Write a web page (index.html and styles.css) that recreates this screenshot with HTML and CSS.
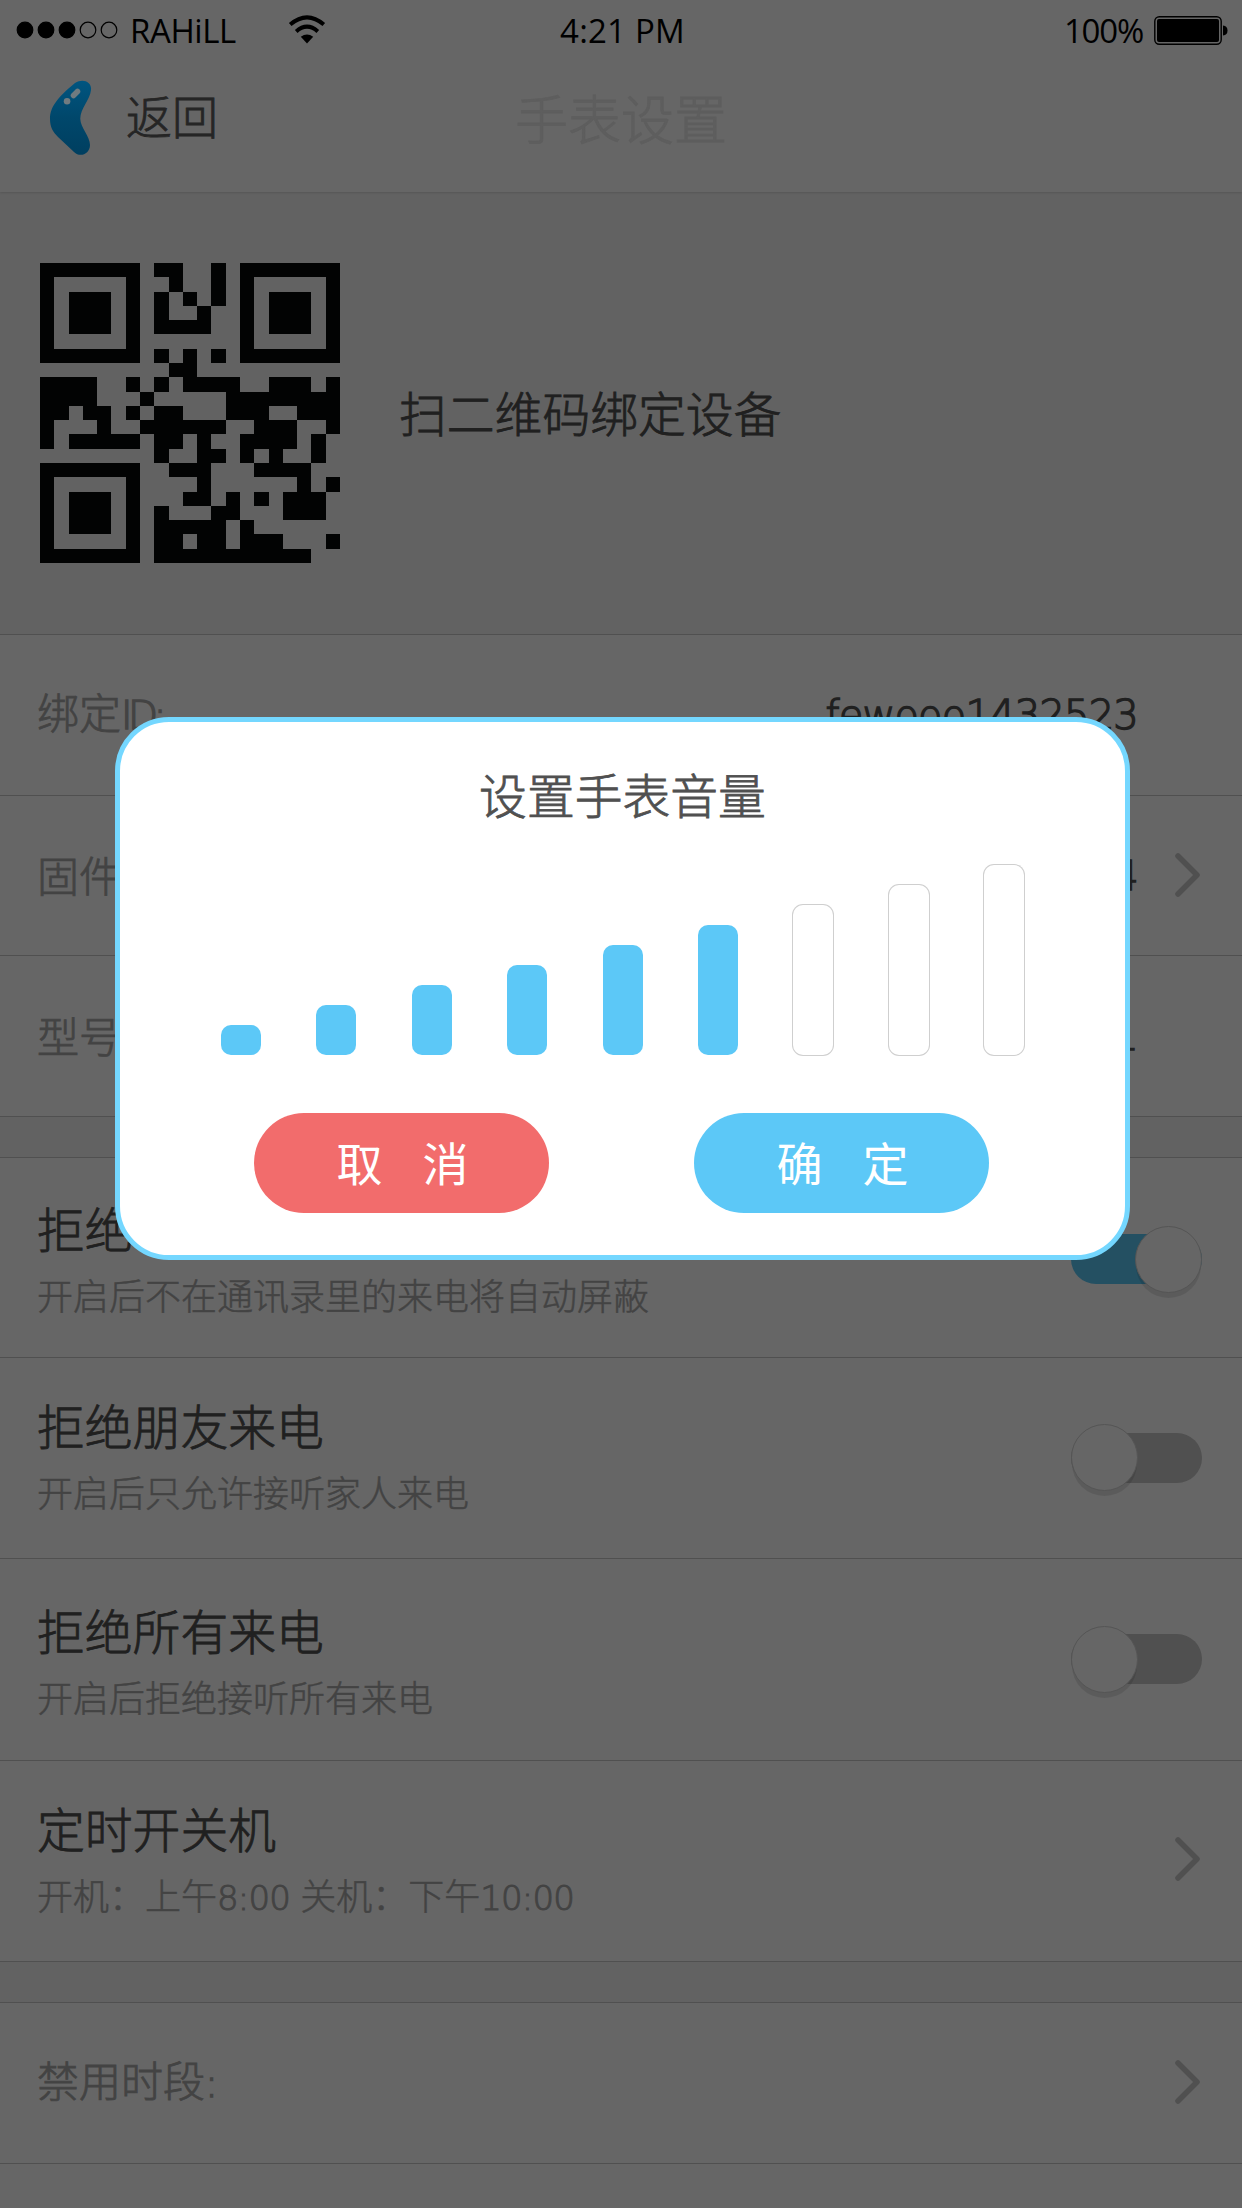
FILE: index.html
```html
<!DOCTYPE html>
<html lang="zh-CN">
<head>
<meta charset="utf-8">
<title>手表设置</title>
<link rel="stylesheet" href="styles.css">
</head>
<body>
<div class="screen">
  <header class="header">
    <div class="status">
      <div class="status-left">
        <svg class="signal" width="102" height="18" viewBox="0 0 102 18"><g stroke="#000" stroke-width="1.2"><circle cx="9" cy="9" r="7.8"/><circle cx="30" cy="9" r="7.8"/><circle cx="51" cy="9" r="7.8"/><circle cx="72" cy="9" r="7.8" fill="none"/><circle cx="93" cy="9" r="7.8" fill="none"/></g></svg>
        <span class="carrier">RAHiLL</span>
        <svg class="wifi" width="38" height="30" viewBox="0 0 38 30"><path d="M2.200 9.600Q19-4.800 35.800 9.600M8.200 16.400Q19 6.800 29.800 16.400" fill="none" stroke="#000" stroke-width="4"/><path d="M19 28.500 12.800 21.800Q19 17 25.200 21.800Z"/></svg>
      </div>
      <span class="clock">4:21 PM</span>
      <div class="status-right">
        <span class="percent">100%</span>
        <svg width="75" height="29" viewBox="0 0 75 29"><rect x=".8" y=".8" width="66.400" height="27.400" rx="4.500" fill="none" stroke="#000" stroke-width="1.400"/><rect x="3" y="3" width="62" height="23" rx="2"/><path d="M69 9.500Q73.500 10 73.500 14.500T69 19.500Z"/></svg>
      </div>
    </div>
    <nav class="nav">
      <div class="back">
        <svg class="bean" width="44" height="78" viewBox="48 78 44 78"><defs><linearGradient id="b" x1="0" y1="0" x2="0" y2="1"><stop offset="0" stop-color="#005580"/><stop offset=".5" stop-color="#00476b"/><stop offset="1" stop-color="#003f60"/></linearGradient></defs><path d="M75 82C83 77 92 81 91 89C90 99 80 108 80.300 118C80.500 127 90 135 90 144C90 153 80 157 74 151L58 136C53 131 50 126 50 118C50 106 57 97 75 82Z" fill="url(#b)"/><g stroke="#707b80" stroke-linecap="round"><path d="M67 100.300h.1" stroke-width="6.500"/><path d="M73.500 94.500 77.500 90.500" stroke-width="5.500"/></g></svg>
        <span>返回</span>
      </div>
      <h1 class="nav-title">手表设置</h1>
    </nav>
  </header>

  <section class="qr-panel">
    <svg width="300" height="300" viewBox="0 0 21 21" shape-rendering="crispEdges"><g fill="none" stroke="#020303"><path d="M.5 .5h6v6h-6zM14.500 .5h6v6h-6zM.5 14.500h6v6h-6z"/><path d="M2 3.500h3M16 3.500h3M2 17.500h3" stroke-width="3"/><path d="M8 .5h2m2 0h1M9 1.500h1m2 0h1M8 2.500h1m1 0h1m1 0h1M8 3.500h1m2 0h1M8 4.500h4M8 6.500h1m1 0h1m1 0h1M9 7.500h2M0 8.500h4m2 0h1m1 0h1m1 0h4m2 0h3m1 0h1M0 9.500h4m3 0h1m5 0h8M0 10.500h2m1 0h2m1 0h1m1 0h2m3 0h3m2 0h3M0 11.500h1m3 0h1m2 0h6m2 0h3m2 0h1M0 12.500h1m1 0h5m1 0h2m1 0h1m2 0h4m1 0h1M8 13.500h1m2 0h2m1 0h1m1 0h1m2 0h1M9 14.500h3m3 0h4M11 15.500h1m6 0h1m1 0h1M10 16.500h2m1 0h1m1 0h1m1 0h3M8 17.500h1m3 0h2m3 0h3M8 18.500h5m1 0h1M8 19.500h2m1 0h2m1 0h3m3 0h1M8 20.500h11"/></g></svg>
    <p class="qr-text">扫二维码绑定设备</p>
  </section>

  <section class="group">
    <div class="row"><span class="label">绑定<span class="latin id">ID:</span></span><span class="latin value">fewooo1432523</span></div>
    <div class="row info"><span class="label">固件</span><span class="latin value">4</span><svg class="chevron" width="26" height="44" viewBox="0 0 26 44"><path d="M3 3 22 22 3 41"/></svg></div>
    <div class="row"><span class="label">型号</span><span class="latin value">1</span></div>
  </section>

  <section class="group">
    <div class="row tall"><div class="text"><h2>拒绝</h2><p>开启后不在通讯录里的来电将自动屏蔽</p></div><span class="toggle on"></span></div>
    <div class="row tall up"><div class="text"><h2>拒绝朋友来电</h2><p>开启后只允许接听家人来电</p></div><span class="toggle"></span></div>
    <div class="row tall"><div class="text"><h2>拒绝所有来电</h2><p>开启后拒绝接听所有来电</p></div><span class="toggle"></span></div>
    <div class="row tall up timer"><div class="text"><h2>定时开关机</h2><p>开机：上午<span class="latin">8:00 </span>关机：下午<span class="latin">10:00</span></p></div><svg class="chevron" width="26" height="44" viewBox="0 0 26 44"><path d="M3 3 22 22 3 41"/></svg></div>
  </section>

  <section class="group last">
    <div class="row"><span class="label">禁用时段<span class="latin id">:</span></span><svg class="chevron" width="26" height="44" viewBox="0 0 26 44"><path d="M3 3 22 22 3 41"/></svg></div>
  </section>

  <div class="dialog">
    <h2 class="dialog-title">设置手表音量</h2>
    <div class="volume">
      <i class="bar full" style="height:30px"></i><i class="bar full" style="height:50px"></i><i class="bar full" style="height:70px"></i><i class="bar full" style="height:90px"></i><i class="bar full" style="height:110px"></i><i class="bar full" style="height:130px"></i><i class="bar" style="height:150px"></i><i class="bar" style="height:170px"></i><i class="bar" style="height:190px"></i>
    </div>
    <div class="actions">
      <button class="btn cancel">取<span class="gap"></span>消</button>
      <button class="btn confirm">确<span class="gap"></span>定</button>
    </div>
  </div>
</div>
</body>
</html>
```
FILE: styles.css
```css
* { box-sizing: border-box; margin: 0; padding: 0; }
:root {
  --surface: #666;
  --page: #626262;
  --line: #505050;
  --ink: #202020;
  --muted: #434343;
  --sky: #5cc8f7;
}
body {
  background: var(--page);
  color: var(--ink);
  font-family: "Noto Sans CJK SC", sans-serif;
  font-weight: 300;
  -webkit-text-stroke: .8px currentColor;
}
h1, h2 { font-weight: 300; }
.screen { position: relative; width: 1242px; height: 2208px; overflow: hidden; display: flex; flex-direction: column; }

.header { height: 192px; flex: none; background: var(--surface); box-shadow: 0 1px 2px rgba(0, 0, 0, .12); }
.status {
  height: 58px; padding: 0 13px 0 16px;
  display: grid; grid-template-columns: 1fr auto 1fr; align-items: center;
  font-family: "Open Sans", sans-serif; font-size: 33px; line-height: 58px; color: #000; font-weight: 400;
  -webkit-text-stroke: 0;
}
.status-left, .status-right { display: flex; align-items: center; }
.status-right { justify-content: flex-end; gap: 11px; }
.status span { margin-top: 2px; }
.status .carrier { margin-left: 12px; width: 108px; letter-spacing: -.4px; }
.wifi { margin-left: 50px; }
.clock { letter-spacing: .2px; }
.percent { letter-spacing: -1.200px; }

.nav { height: 120px; display: grid; grid-template-columns: 1fr auto 1fr; align-items: center; padding: 0 48px; }
.back { display: flex; align-items: center; gap: 34px; font-size: 46px; line-height: 70px; color: #252525; }
.back span { margin-top: -9px; }
.nav-title { font-size: 53px; line-height: 80px; color: #5e5e5e; margin-top: -3px; }

.qr-panel { height: 442px; flex: none; display: flex; align-items: center; padding: 0 40px; gap: 59px; }
.qr-text { font-size: 47.800px; line-height: 70px; margin-top: -3px; }

.group { flex: none; background: var(--surface); border-top: 1px solid var(--line); border-bottom: 1px solid var(--line); margin-bottom: 40px; }
.row { height: 160px; display: flex; align-items: center; padding: 0 40px 0 37px; }
.row + .row { border-top: 1px solid var(--line); height: 161px; }
.row + .row.info { height: 160px; }
.label { font-size: 42px; line-height: 60px; color: var(--muted); margin-top: -3px; }
.latin { font-family: "DejaVu Sans", sans-serif; font-weight: 200; -webkit-text-stroke: 1.400px currentColor; }
.id { font-size: 39px; letter-spacing: -4.500px; }
.value { margin-left: auto; margin-right: 64px; font-size: 40px; line-height: 60px; letter-spacing: -.8px; }
.chevron { fill: none; stroke: #505050; stroke-width: 5.500; stroke-linecap: round; stroke-linejoin: round; margin: -2px 1px 0 auto; }
.value + .chevron { margin-left: -27px; }

.row.tall, .row.tall + .row.tall { height: 201px; justify-content: space-between; }
.row.tall:first-child { height: 199px; }
.row.tall + .row.tall:nth-child(3) { height: 202px; }
.text { padding-top: 2px; }
.up .text { padding-top: 0; margin-top: -5px; }
.up.timer .text { margin-top: 0; }
.timer .chevron { margin-top: -5px; }
.text h2 { font-size: 47.800px; line-height: 70px; }
.text p { font-size: 36px; line-height: 62px; color: var(--muted); -webkit-text-stroke-width: .5px; }
.text .latin { font-size: 34px; letter-spacing: -.8px; white-space: pre; -webkit-text-stroke-width: 1px; }

.toggle { width: 131px; height: 50px; border-radius: 25px; background: #505050; display: flex; align-items: center; margin-top: -1px; }
.toggle::before { content: ""; width: 65px; height: 65px; flex: none; border-radius: 50%; background: var(--surface); border: 1px solid #555; box-shadow: 0 6px 0 -1px rgba(0, 0, 0, .1); }
.toggle.on { background: #245062; justify-content: flex-end; margin-top: 3px; }
.last { flex: 1; margin-bottom: 0; border-bottom: 0; }
.last .row { height: 161px; border-bottom: 1px solid var(--line); }

.dialog {
  position: absolute; left: 115px; top: 717px; width: 1015px; height: 543px;
  background: #fff; border: 5px solid #74d7ff; border-radius: 54px;
  display: flex; flex-direction: column; align-items: center;
}
.dialog-title { font-size: 47.800px; line-height: 70px; color: #505050; margin-top: 37px; }
.volume { width: 803px; height: 190px; margin-top: 36px; display: flex; justify-content: space-between; align-items: flex-end; }
.bar { width: 40px; border-radius: 10px; box-shadow: 0 0 0 1px #cfcfcf; }
.bar.full { background: var(--sky); box-shadow: none; }
.actions { display: flex; gap: 145px; margin: 58px 2px 0 0; }
.btn {
  width: 295px; height: 100px; border: 0; border-radius: 50px; color: #fff;
  font: 400 46px/100px "Noto Sans CJK SC", sans-serif; display: flex; justify-content: center; align-items: center; padding: 0 0 4px 2px;
  -webkit-text-stroke: 0;
}
.btn .gap { width: 40px; }
.cancel { background: #f26c6c; }
.confirm { background: var(--sky); }
```
